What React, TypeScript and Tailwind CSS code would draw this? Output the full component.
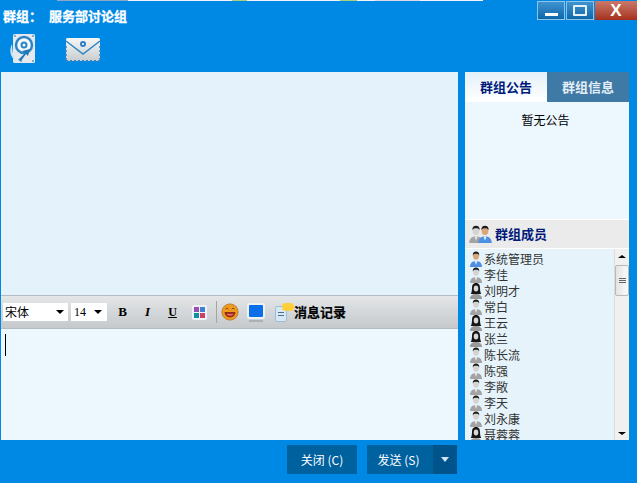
import React from 'react';

const cjk = "font-['Noto_Sans_CJK_SC','Liberation_Sans',sans-serif]";

const members = [
  { name: '系统管理员', kind: 'admin' },
  { name: '李佳', kind: 'man' },
  { name: '刘明才', kind: 'woman' },
  { name: '常白', kind: 'man' },
  { name: '王云', kind: 'woman' },
  { name: '张兰', kind: 'woman' },
  { name: '陈长流', kind: 'man' },
  { name: '陈强', kind: 'man' },
  { name: '李敞', kind: 'man' },
  { name: '李天', kind: 'man' },
  { name: '刘永康', kind: 'man' },
  { name: '聂蓉蓉', kind: 'woman' },
];

const Avatar = ({ kind, className = 'w-[14px] h-[16px]' }: { kind: string; className?: string }) => {
  const body = kind === 'admin' ? '#4d8fe0' : '#a3a3a3';
  if (kind === 'woman') {
    return (
      <svg viewBox="0 0 14 16" className={`shrink-0 ${className}`}>
        <path d="M7 0C3.8 0 3 2.5 3 5c0 3-.6 5-1.2 6h10.4C11.600 10 11 8 11 5c0-2.500-.8-5-4-5z" fill="#151515" />
        <ellipse cx="7" cy="5.500" rx="2.300" ry="3" fill="#d8d8d8" />
        <path d="M1 16c0-3 2-5 6-5s6 2 6 5z" fill="#9a9a9a" />
      </svg>
    );
  }
  return (
    <svg viewBox="0 0 14 16" className={`shrink-0 ${className}`}>
      <path d="M1 16c0-4 2.500-6 6-6s6 2 6 6z" fill={body} />
      <path d="M5.500 10 7 14l1.500-4z" fill={kind === 'admin' ? '#dbe9fa' : '#e4e4e4'} />
      <ellipse cx="7" cy="5" rx="3" ry="3.800" fill={kind === 'admin' ? '#d9a679' : '#d4d4d4'} />
      <path d="M3.800 4.500C3.500 1.800 5 .6 7 .6s3.500 1.200 3.200 3.900C9.500 3 8.500 2.800 7 2.800s-2.500.2-3.200 1.700z" fill="#1c1c1c" />
    </svg>
  );
};

const DiskIcon = () => (
  <svg width="28" height="32" viewBox="0 0 28 32">
    <rect x="4" y="1" width="22" height="29" rx="1.500" fill="#e6e9ec" />
    <circle cx="15" cy="12" r="8" fill="#f4f8fb" stroke="#2c86c4" strokeWidth="2.500" />
    <circle cx="15" cy="12" r="2.500" fill="none" stroke="#2c86c4" strokeWidth="2" />
    <path d="M9 27l7-7-3-2 8-2-2 7-2-2-5 7z" fill="#1f78b8" />
    <path d="M3 11C0 17 1 24 7 28 4 23 3 17 3 11z" fill="#cfe6f5" />
    <circle cx="6" cy="3" r=".9" fill="#4f8fbe" />
    <circle cx="24" cy="3" r=".9" fill="#4f8fbe" />
    <circle cx="24" cy="28" r=".9" fill="#4f8fbe" />
    <circle cx="12" cy="28" r=".9" fill="#4f8fbe" />
  </svg>
);

const MailIcon = () => (
  <svg width="36" height="26" viewBox="0 0 36 26">
    <defs>
      <linearGradient id="mailFill" x1="0" y1="0" x2="0" y2="1">
        <stop offset="0" stopColor="#f6f7f7" />
        <stop offset="1" stopColor="#c9cdcf" />
      </linearGradient>
    </defs>
    <rect x="1" y="1" width="34" height="23" rx="1.500" fill="url(#mailFill)" />
    <path d="M1 4l17 13L35 4" fill="none" stroke="#2f86c6" strokeWidth="1.500" />
    <circle cx="18" cy="7" r="3" fill="#2f7fbf" />
    <circle cx="18" cy="7" r="1" fill="#fff" />
    <path d="M1 24h34" stroke="#2f86c6" strokeWidth="2" strokeDasharray="2 2" />
    <path d="M1 9v14M35 9v14" stroke="#2f86c6" strokeWidth="1.500" strokeDasharray="2 2" />
  </svg>
);

const Caret = () => <span className="w-0 h-0 border-x-[4px] border-x-transparent border-t-[4px] border-t-black" />;

const App = () => {
  return (
    <div className={`w-[637px] h-[483px] bg-[#0088e5] flex flex-col overflow-hidden ${cjk}`}>
      {/* desktop showing through above the window */}
      <div className="h-px flex">
        <span className="w-[57px] bg-[#0088e5]" />
        <span className="w-[71px] bg-[#8fa8c8]" />
        <span className="w-[104px] bg-[#f2f4f6]" />
        <span className="w-[15px] bg-[#a8cf7e]" />
        <span className="w-[93px] bg-[#f2f4f6]" />
        <span className="w-[17px] bg-[#a8cf7e]" />
        <span className="w-[18px] bg-[#f2f4f6]" />
        <span className="w-[45px] bg-[#e0d8dc]" />
        <span className="w-[63px] bg-[#f2f4f6]" />
      </div>
      <div className="h-[71px] flex flex-col">
        <div className="flex justify-between">
          <p className="pl-[3px] pt-[7px] text-[13px] leading-[16px] font-bold text-white [-webkit-text-stroke:0.3px_white]">
            <span>群组：</span>
            <span className="ml-[7px]">服务部讨论组</span>
          </p>
          <div className="flex gap-px h-[19px]">
            <div className="w-[28px] border border-[#8cc4ea] bg-gradient-to-b from-[#3f93cf] to-[#0b67a9] flex items-end justify-center pb-[3px]">
              <span className="w-[13px] h-[3px] bg-white" />
            </div>
            <div className="w-[28px] border border-[#8cc4ea] bg-gradient-to-b from-[#3f93cf] to-[#0b67a9] flex items-center justify-center">
              <span className="w-[14px] h-[11px] border-2 border-[#e8f1f7] rounded-[1px]" />
            </div>
            <div className="w-[42px] bg-gradient-to-b from-[#c9796a] to-[#a5301c] flex items-center justify-center">
              <span className="text-white font-bold text-[17px] leading-[17px] font-['Liberation_Sans',sans-serif]">X</span>
            </div>
          </div>
        </div>
        <div className="flex pl-[9px] items-start gap-[28px] mt-[9px]">
          <DiskIcon />
          <div className="mt-[4px]"><MailIcon /></div>
        </div>
      </div>

      <div className="h-[368px] flex pl-px">
        <div className="w-[457px] flex flex-col">
          <div className="h-[223px] bg-[#e4f2fb]" />
          <div className="h-[34px] bg-gradient-to-b from-[#e4e6e7] to-[#c5c9cc] border-y border-[#b4bcc2] flex items-center pl-[2px]">
            <div className="w-[65px] h-[18px] bg-white flex items-center justify-between pl-[2px] pr-[4px] text-[12px]">
              <span>宋体</span><Caret />
            </div>
            <div className="w-[36px] h-[18px] ml-[3px] bg-white flex items-center justify-between pl-[3px] pr-[5px] text-[12px] font-['Liberation_Serif',serif]">
              <span>14</span><Caret />
            </div>
            <span className="w-[25px] ml-[3px] text-center text-[13px] font-bold font-['Liberation_Serif',serif]">B</span>
            <span className="w-[25px] text-center text-[13px] font-bold italic font-['Liberation_Serif',serif]">I</span>
            <span className="w-[25px] text-center text-[12px] font-bold underline font-['Liberation_Serif',serif]">U</span>
            <div className="w-[15px] h-[15px] ml-[7px] p-[2px] bg-[#eef3f7] rounded-[2px] grid grid-cols-2 gap-px">
              <span className="bg-[#9a4fb0]" /><span className="bg-[#3f7fd0]" />
              <span className="bg-[#0f8f9f]" /><span className="bg-[#d03c68]" />
            </div>
            <span className="w-px h-[22px] bg-[#a0a6aa] ml-[9px]" />
            <svg width="18" height="18" viewBox="0 0 20 20" className="ml-[4px]">
              <circle cx="10" cy="10" r="9" fill="#f09a1e" stroke="#b9782c" />
              <path d="M4 10h12c0 4-3 6-6 6s-6-2-6-6z" fill="#8f2a1a" />
              <path d="M6 12c1 3 7 3 8 0z" fill="#e66a5a" />
              <path d="M5 7l1.500-1.500L8 7M12 7l1.500-1.500L15 7" fill="none" stroke="#6b3a10" />
            </svg>
            <svg width="18" height="19" viewBox="0 0 18 19" className="ml-[8px]">
              <rect x="0" y="0" width="18" height="16" rx="2" fill="#eef1f3" />
              <rect x="2" y="2" width="14" height="12" rx="1" fill="#0a6ee8" />
              <rect x="2" y="17" width="14" height="2" fill="#a9afb4" />
            </svg>
            <div className="relative w-[19px] h-[19px] ml-[10px]">
              <div className="absolute left-0 top-[3px] w-[12px] h-[16px] bg-[#d6e8f5] border border-[#9dbdd4] rounded-[2px] flex flex-col gap-[2px] px-[2px] pt-[5px]">
                <span className="h-px bg-[#4d6f88]" /><span className="h-px bg-[#4d6f88]" />
              </div>
              <div className="absolute left-[7px] top-0 w-[12px] h-[8px] bg-[#ffcf3a] rounded-full" />
            </div>
            <span className="text-[13px] font-bold text-black [-webkit-text-stroke:0.2px_black]">消息记录</span>
          </div>
          <div className="flex-1 bg-[#ecf7fe] pl-[4px] pt-[5px]">
            <div className="w-px h-[22px] bg-black" />
          </div>
        </div>

        <div className="w-[164px] ml-[7px] flex flex-col">
          <div className="flex h-[30px]">
            <div className="w-[82px] bg-gradient-to-b from-[#e4f1fa] to-white flex items-center justify-center text-[13px] font-bold text-[#001a7a]">群组公告</div>
            <div className="flex-1 bg-[#3f79a6] flex items-center justify-center text-[13px] font-bold text-[#e4eef5]">群组信息</div>
          </div>
          <div className="h-[118px] bg-[#ecf7fe] border-b border-white pt-[9px] pr-[3px] text-center text-[12px] leading-[18px] text-black">暂无公告</div>
          <div className="h-[29px] bg-[#ebebeb] border-b border-white flex items-center pl-[3px] gap-[2px]">
            <div className="flex">
              <Avatar kind="man" className="w-[16px] h-[18px]" />
              <div className="-ml-[7px]"><Avatar kind="admin" className="w-[16px] h-[18px]" /></div>
            </div>
            <span className="text-[13px] font-bold text-[#001a7a]">群组成员</span>
          </div>
          <div className="flex-1 min-h-0 flex overflow-hidden">
            <div className="w-[150px] bg-[#e6f3fb] border-r border-[#dcdcdc] pt-[2px] pl-[4px] overflow-hidden">
              {members.map((m) => (
                <div key={m.name} className="h-[16px] flex items-center gap-px text-[12px] leading-[16px] text-[#333]">
                  <Avatar kind={m.kind} />
                  <span>{m.name}</span>
                </div>
              ))}
            </div>
            <div className="flex-1 bg-[#f0f0f0] flex flex-col items-center justify-between">
              <div className="w-full flex flex-col items-center pt-[6px]">
                <span className="w-0 h-0 border-x-[4px] border-x-transparent border-b-[3px] border-b-black" />
                <div className="w-full h-[31px] mt-[7px] bg-gradient-to-r from-[#e4e4e4] to-[#fafafa] border border-[#b8b8b8] rounded-[2px] flex flex-col items-center justify-center gap-px">
                  <span className="w-[7px] h-px bg-[#666]" /><span className="w-[7px] h-px bg-[#666]" /><span className="w-[7px] h-px bg-[#666]" />
                </div>
              </div>
              <span className="w-0 h-0 mb-[5px] border-x-[4px] border-x-transparent border-t-[3px] border-t-black" />
            </div>
          </div>
        </div>
      </div>

      <div className="flex-1 flex items-start pl-[287px] pt-[5px] gap-[10px] text-[12px] text-white">
        <div className="w-[70px] h-[29px] bg-[#00619f] flex items-center justify-center">关闭 (C)</div>
        <div className="flex h-[29px]">
          <div className="w-[66px] pr-[3px] bg-[#00619f] flex items-center justify-center">发送 (S)</div>
          <div className="w-[24px] bg-[#00538b] flex items-center justify-center">
            <span className="w-0 h-0 border-x-[4px] border-x-transparent border-t-[5px] border-t-[#cfe6f5]" />
          </div>
        </div>
      </div>
    </div>
  );
};

export default App;
